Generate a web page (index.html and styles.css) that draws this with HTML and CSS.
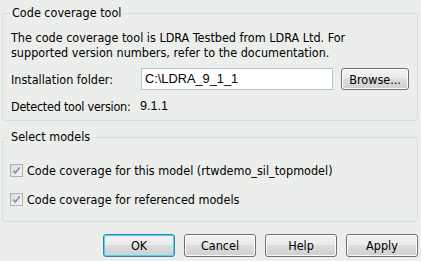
FILE: index.html
```html
<!DOCTYPE html>
<html>
<head>
<meta charset="utf-8">
<link rel="stylesheet" href="styles.css">
</head>
<body>
<div class="dialog">
  <fieldset class="group group-tool">
    <legend>Code coverage tool</legend>
    <p class="desc">The code coverage tool is LDRA Testbed from LDRA Ltd. For<br>supported version numbers, refer to the documentation.</p>
    <div class="folder-row">
      <span class="label">Installation folder:</span>
      <div class="input">C:\LDRA_9_1_1</div>
      <button class="btn btn-browse">Browse...</button>
    </div>
    <div class="version-row">
      <span class="label">Detected tool version:</span>
      <span class="ver">9.1.1</span>
    </div>
  </fieldset>
  <fieldset class="group group-models">
    <legend>Select models</legend>
    <div class="check-row">
      <span class="check"><svg width="11" height="11" viewBox="0 0 11 11"><path d="M2.3 5.6 L4.4 8 L8.7 2.4" fill="none" stroke="#7d92b8" stroke-width="1.6"/></svg></span>
      <span>Code coverage for this model (rtwdemo_sil_topmodel)</span>
    </div>
    <div class="check-row second">
      <span class="check"><svg width="11" height="11" viewBox="0 0 11 11"><path d="M2.3 5.6 L4.4 8 L8.7 2.4" fill="none" stroke="#7d92b8" stroke-width="1.6"/></svg></span>
      <span>Code coverage for referenced models</span>
    </div>
  </fieldset>
  <div class="buttons">
    <button class="btn btn-main default">OK</button>
    <button class="btn btn-main">Cancel</button>
    <button class="btn btn-main">Help</button>
    <button class="btn btn-main">Apply</button>
  </div>
</div>
</body>
</html>
```
FILE: styles.css
```css
html, body {
  margin: 0;
  padding: 0;
  background: #eceeec;
}
body {
  font-family: "DejaVu Sans Condensed", "DejaVu Sans", sans-serif;
  font-size: 12.5px;
  color: #000;
}
.dialog {
  width: 416px;
  padding: 0 3px 0 2px;
}
.group {
  margin: 0;
  border: 1px solid #d3dee5;
  border-radius: 3px;
  padding: 0 8px;
  min-width: 0;
}
.group legend {
  padding: 0 2px;
  margin-left: -1px;
  line-height: 14px;
  height: 14px;
}
.group-tool {
  margin-top: 6px;
  padding-top: 10px;
  padding-bottom: 6px;
}
.desc {
  margin: 0;
  line-height: 15px;
}
.folder-row {
  display: flex;
  align-items: center;
  margin-top: 8px;
  height: 22px;
}
.label {
  width: 130px;
  flex: none;
}
.input {
  box-sizing: border-box;
  width: 193px;
  height: 22px;
  border: 1px solid #b7c5d4;
  background: #fff;
  font-family: "Liberation Sans", Arial, sans-serif;
  font-size: 12.8px;
  line-height: 20px;
  padding-left: 3px;
}
.btn {
  box-sizing: border-box;
  font-family: "DejaVu Sans Condensed", "DejaVu Sans", sans-serif;
  font-size: 12.5px;
  color: #000;
  border: 1px solid #707070;
  border-radius: 3px;
  background: linear-gradient(#f2f2f2 0%, #ebebeb 45%, #dddddd 50%, #cfcfcf 100%);
  padding: 0;
  height: 22px;
  line-height: 19px;
  box-shadow: inset 0 0 0 1px #fcfcfc;
}
.btn-browse {
  width: 68px;
  margin-left: 8px;
}
.version-row {
  display: flex;
  margin-top: 9px;
  line-height: 15px;
}
.version-row .label {
  width: 129px;
  letter-spacing: -0.25px;
}
.ver {
  font-family: "Liberation Sans", Arial, sans-serif;
  font-size: 12.6px;
}
.group-models {
  margin-top: 9px;
  padding: 18px 8px 14px 7px;
}
.check-row {
  display: flex;
  align-items: center;
  gap: 4px;
  height: 16px;
}
.check-row.second {
  margin-top: 13px;
}
.check {
  box-sizing: border-box;
  flex: none;
  width: 13px;
  height: 13px;
  border: 1px solid #b1b1b1;
  background: linear-gradient(135deg, #dcdcdc, #f4f4f4);
  display: flex;
  align-items: center;
  justify-content: center;
}
.check svg {
  display: block;
}
.buttons {
  display: flex;
  justify-content: flex-end;
  gap: 9px;
  margin-top: 12px;
}
.btn-main {
  width: 72px;
  height: 23px;
}
.btn.default {
  border-color: #3c7fb1;
  box-shadow: inset 0 0 0 1px #48d6f6;
}
```
